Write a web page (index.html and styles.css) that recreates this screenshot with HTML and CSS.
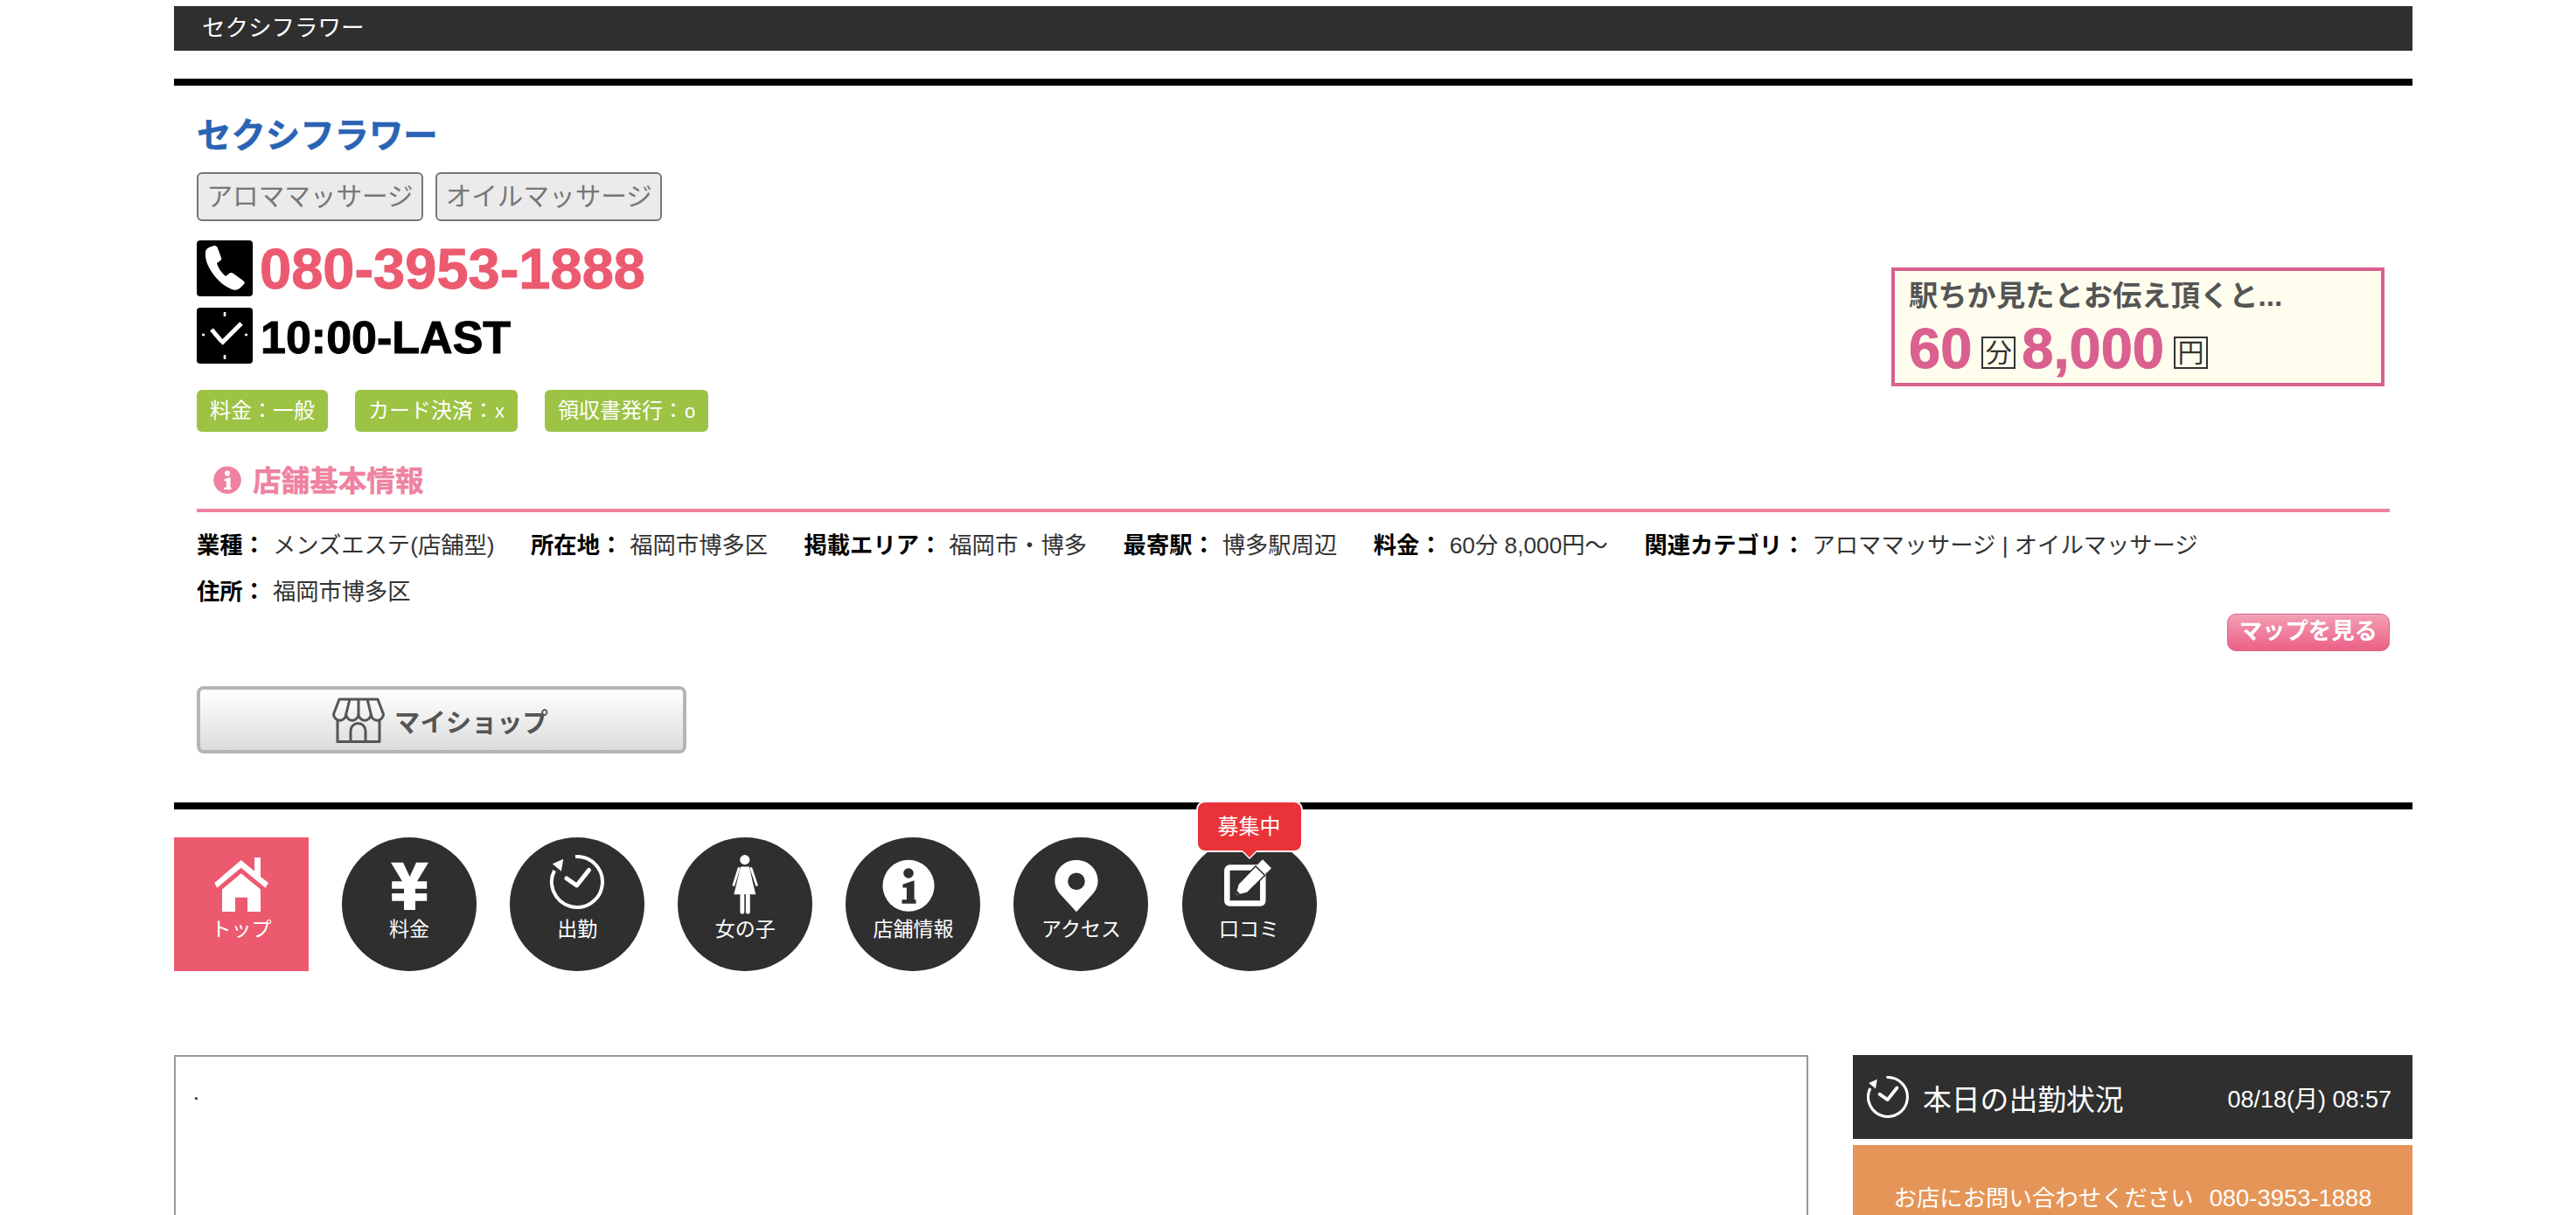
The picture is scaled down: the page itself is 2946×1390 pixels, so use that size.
FILE: index.html
```html
<!DOCTYPE html>
<html lang="ja">
<head>
  <meta charset="UTF-8">
  <title>セクシフラワー</title>
  <link rel="stylesheet" href="styles.css">
</head>
<body>
  <div class="wrap">
    <div class="topbar">セクシフラワー</div>

    <div class="shop">
      <div class="shop-top">
        <div class="shop-main">
          <h1 class="shop-name">セクシフラワー</h1>
          <div class="tags">
            <span class="tag">アロママッサージ</span>
            <span class="tag">オイルマッサージ</span>
          </div>
          <div class="phone-row">
            <svg class="square-icon" viewBox="0 0 64 64">
              <rect width="64" height="64" rx="4" fill="#000"/>
              <path fill="#fff" d="M14 8 L20 6 Q23 6 24 9 L28 20 Q29 22 26 24 L23 26 Q25 34 33 41 L37 38 Q39 36 42 38 L53 46 Q56 48 54 50 L49 55 Q45 58 40 56 Q26 50 17 36 Q9 24 10 14 Q10 10 14 8 Z"/>
            </svg>
            <span class="phone-no">080-3953-1888</span>
          </div>
          <div class="hours-row">
            <svg class="square-icon" viewBox="0 0 64 64">
              <rect width="64" height="64" rx="4" fill="#000"/>
              <path fill="none" stroke="#fff" stroke-width="2.6" d="M32 5 V10 M32 54 V59 M6 31 H9 M55 31 H58"/>
              <path fill="none" stroke="#fff" stroke-width="5" d="M17 25 L28 38 M28 41 L51 18"/>
            </svg>
            <span class="hours">10:00-LAST</span>
          </div>
          <div class="badges">
            <span class="badge">料金：一般</span>
            <span class="badge">カード決済：<small>x</small></span>
            <span class="badge">領収書発行：<small>o</small></span>
          </div>
        </div>
        <div class="promo">
          <div class="promo-title">駅ちか見たとお伝え頂くと...</div>
          <div class="promo-price">
            <span class="promo-num">60</span><span class="promo-unit">分</span>
            <span class="promo-num">8,000</span><span class="promo-unit">円</span>
          </div>
        </div>
      </div>

      <h2 class="info-head">
        <svg class="info-head-icon" viewBox="10 5 60 60">
          <circle cx="40" cy="35.3" r="29.5" fill="#ee82a0"/>
          <circle cx="40" cy="21" r="5.8" fill="#fff"/>
          <path fill="#fff" d="M33.4 33.7 L46.6 29.3 V51.3 H48.5 V55.7 H32.5 V51.3 H37.9 V37.5 H33.4 Z"/>
        </svg>
        店舗基本情報
      </h2>

      <div class="details">
        <div class="detail"><b>業種：</b><span>メンズエステ(店舗型)</span></div>
        <div class="detail"><b>所在地：</b><span>福岡市博多区</span></div>
        <div class="detail"><b>掲載エリア：</b><span>福岡市・博多</span></div>
        <div class="detail"><b>最寄駅：</b><span>博多駅周辺</span></div>
        <div class="detail"><b>料金：</b><span>60分 8,000円～</span></div>
        <div class="detail"><b>関連カテゴリ：</b><span>アロママッサージ | オイルマッサージ</span></div>
        <div class="detail"><b>住所：</b><span>福岡市博多区</span></div>
      </div>

      <div class="map-row"><a class="map-btn">マップを見る</a></div>

      <a class="myshop-btn">
        <svg class="myshop-icon" viewBox="0 0 60 52" fill="none" stroke="#555" stroke-width="3" stroke-linejoin="round">
          <path d="M8 2 H52 L58.5 19 A7.1 7.1 0 0 1 44.25 19 A7.1 7.1 0 0 1 30 19 A7.1 7.1 0 0 1 15.75 19 A7.1 7.1 0 0 1 1.5 19 Z"/>
          <path d="M20 2 L15.75 19 M30 2 V19 M40 2 L44.25 19"/>
          <path d="M6 26 V50.5 H54 V26"/>
          <path d="M21 50 V38 A8.5 8.5 0 0 1 38 38 V50"/>
        </svg>
        マイショップ
      </a>
    </div>

    <nav class="nav">
      <a class="nav-item nav-item-top">
        <svg class="nav-icon" viewBox="0 0 90 70" fill="#fff">
          <path d="M44.7 6 L60 18.8 V3 H67 V25 L76 32 L72.6 37.7 L44.7 14.7 L17.2 37.7 L14.4 32 Z"/>
          <path d="M44.7 21.3 L67 39.5 V65 H52 V48.7 H38 V65 H23 V39.5 Z"/>
        </svg>
        <span>トップ</span>
      </a>
      <a class="nav-item">
        <svg class="nav-icon" viewBox="0 0 90 70" fill="#fff">
          <path d="M24 8.7 H38 L45.6 25 L53 8.7 H67 L54 30.3 H65.2 V38.7 H52 V44 H65.2 V52.7 H52 V63 H39 V52.7 H25.2 V44 H39 V38.7 H25.2 V30.3 H37 Z"/>
        </svg>
        <span>料金</span>
      </a>
      <a class="nav-item">
        <svg class="nav-icon" viewBox="0 0 90 70">
          <path fill="none" stroke="#fff" stroke-width="4" d="M43 2 A29 29 0 1 1 19 18"/>
          <path fill="#fff" d="M29.3 4.7 L16.8 10.3 L26.8 18.7 Z"/>
          <path fill="none" stroke="#fff" stroke-width="5" stroke-linecap="round" stroke-linejoin="round" d="M33 27 L44.6 35 L58.5 17.5"/>
        </svg>
        <span>出勤</span>
      </a>
      <a class="nav-item">
        <svg class="nav-icon" viewBox="0 0 90 70" fill="#fff">
          <circle cx="44.8" cy="5.6" r="5.6"/>
          <path d="M40 13.5 H50 L53.5 30 L57.3 45.3 H32.3 L36 30 Z"/>
          <path fill="none" stroke="#fff" stroke-width="2.8" stroke-linecap="round" d="M38 15.5 L32 34.5 M52 15.5 L58.4 34.5"/>
          <rect x="39.4" y="44" width="4.9" height="23.7" rx="2.4"/>
          <rect x="45.9" y="44" width="4.9" height="23.7" rx="2.4"/>
        </svg>
        <span>女の子</span>
      </a>
      <a class="nav-item">
        <svg class="nav-icon" viewBox="0 0 90 70">
          <circle cx="40" cy="35.3" r="29.5" fill="#fff"/>
          <circle cx="40" cy="21" r="5.8" fill="#2f2f2f"/>
          <path fill="#2f2f2f" d="M33.4 33.7 L46.6 29.3 V51.3 H48.5 V55.7 H32.5 V51.3 H37.9 V37.5 H33.4 Z"/>
        </svg>
        <span>店舗情報</span>
      </a>
      <a class="nav-item">
        <svg class="nav-icon" viewBox="0 0 90 70">
          <path fill="#fff" fill-rule="evenodd" d="M40 6 C26 6 15.4 16.5 15.4 30 C15.4 36 18 41 22 45.5 L40 65.3 L58 45.5 C62 41 64.6 36 64.6 30 C64.6 16.5 54 6 40 6 Z M40 20.5 A9.8 9.8 0 1 1 40 40.1 A9.8 9.8 0 1 1 40 20.5 Z"/>
        </svg>
        <span>アクセス</span>
      </a>
      <a class="nav-item">
        <svg class="nav-icon" viewBox="0 0 90 70">
          <rect x="19.3" y="14.6" width="41" height="41" rx="3" fill="none" stroke="#fff" stroke-width="6.5"/>
          <path fill="#fff" stroke="#2f2f2f" stroke-width="3" paint-order="stroke" d="M29.3 46 L32.7 33.7 L52 14 L61.5 23.5 L42 42.7 Z"/>
          <path fill="#2f2f2f" d="M29.3 46 L30.6 41 L34.2 44.6 Z"/>
          <path fill="#fff" d="M60 5.3 L70 15.3 L64.3 21 L54.3 11 Z"/>
        </svg>
        <span>口コミ</span>
        <em class="recruit">募集中</em>
      </a>
    </nav>

    <div class="content">
      <div class="content-main">.</div>
      <aside class="side">
        <div class="side-head">
          <svg class="side-head-icon" viewBox="14 0 62 62">
            <path fill="none" stroke="#fff" stroke-width="4" d="M43 2 A29 29 0 1 1 19 18"/>
            <path fill="#fff" d="M29.3 4.7 L16.8 10.3 L26.8 18.7 Z"/>
            <path fill="none" stroke="#fff" stroke-width="5" stroke-linecap="round" stroke-linejoin="round" d="M33 27 L44.6 35 L58.5 17.5"/>
          </svg>
          <span class="side-title">本日の出勤状況</span>
          <span class="side-date">08/18(月) 08:57</span>
        </div>
        <div class="side-contact">お店にお問い合わせください<span class="side-tel">080-3953-1888</span></div>
      </aside>
    </div>
  </div>
</body>
</html>
```

FILE: styles.css
```css
html, body {
  height: 100%;
  overflow: hidden;
}
body {
  margin: 0;
  background: #fff;
  color: #333;
  font-family: "Liberation Sans", "Noto Sans CJK JP", sans-serif;
}
a {
  color: inherit;
  text-decoration: none;
}
.wrap {
  width: 2560px;
  margin-left: 199px;
  padding-top: 7px;
}

/* top bar */
.topbar {
  height: 51px;
  line-height: 51px;
  padding-left: 32px;
  background: #2f2f2f;
  color: #fff;
  font-size: 26.5px;
}

/* shop block */
.shop {
  margin-top: 32px;
  padding: 0 26px 56px;
  border-top: 8px solid #000;
  border-bottom: 8px solid #000;
}
.shop-top {
  display: flex;
  justify-content: space-between;
}
.shop-name {
  margin: 33px 0 0;
  height: 48px;
  line-height: 48px;
  font-size: 39.4px;
  color: #2a63b5;
  -webkit-text-stroke: 0.5px #2a63b5;
}
.tags {
  display: flex;
  gap: 14px;
  margin-top: 18px;
}
.tag {
  height: 52px;
  line-height: 52px;
  padding: 0 9.5px;
  border: 2px solid #777;
  border-radius: 6px;
  background: #ebebeb;
  color: #777;
  font-size: 29.6px;
}
.phone-row, .hours-row {
  display: flex;
  align-items: center;
  gap: 8px;
  height: 64px;
}
.phone-row {
  margin-top: 22px;
}
.hours-row {
  margin-top: 13px;
}
.square-icon {
  width: 64px;
  height: 64px;
}
.phone-no {
  font-size: 65px;
  font-weight: bold;
  color: #ec5a70;
  -webkit-text-stroke: 1px #ec5a70;
}
.hours {
  padding: 4px 0 0 1px;
  font-size: 52px;
  font-weight: bold;
  color: #000;
  -webkit-text-stroke: 1px #000;
}
.badges {
  display: flex;
  gap: 31px;
  margin-top: 30px;
}
.badge {
  height: 48px;
  line-height: 48px;
  padding: 0 15px;
  border-radius: 6px;
  background: #9dc345;
  color: #fff;
  font-size: 24px;
}
.badge small {
  font-size: 22px;
  padding-left: 1px;
}

/* price box */
.promo {
  align-self: flex-start;
  box-sizing: border-box;
  width: 564px;
  height: 136px;
  margin: 208px 6px 0 0;
  padding: 9px 16px 0;
  border: 4px solid #d9608f;
  background: #fffeee;
}
.promo-title {
  line-height: 40px;
  font-size: 33.3px;
  font-weight: bold;
  color: #555;
}
.promo-price {
  display: flex;
  align-items: center;
  height: 64px;
  margin-top: 7px;
}
.promo-num {
  font-size: 65px;
  font-weight: bold;
  color: #d9608f;
  -webkit-text-stroke: 1px #d9608f;
}
.promo-unit {
  width: 35px;
  height: 33px;
  line-height: 33px;
  margin: 11px 7px 0 11px;
  border: 2px solid #333;
  text-align: center;
  font-size: 30px;
}

/* info */
.info-head {
  display: flex;
  align-items: center;
  gap: 13px;
  margin: 37px 0 0;
  padding: 2px 0 14px 19px;
  border-bottom: 4px solid #ee82a0;
  line-height: 35px;
  font-size: 32.6px;
  color: #ee82a0;
  -webkit-text-stroke: 0.4px #ee82a0;
}
.info-head-icon {
  width: 32px;
  height: 32px;
  margin-top: -4px;
}
.details {
  display: flex;
  flex-wrap: wrap;
  column-gap: 41.5px;
  padding-top: 12px;
  line-height: 53px;
  font-size: 26.3px;
}
.detail b {
  color: #000;
  margin-right: 8px;
}
.map-row {
  display: flex;
  justify-content: flex-end;
  margin-top: -2px;
}
.map-btn {
  box-sizing: border-box;
  height: 43px;
  line-height: 39px;
  padding: 0 13px;
  border: 1px solid #d9688a;
  border-radius: 10px;
  background: linear-gradient(#f2a0b4, #ec5f87);
  color: #fff;
  font-size: 26.4px;
  font-weight: bold;
}
.myshop-btn {
  display: flex;
  align-items: center;
  justify-content: center;
  gap: 11px;
  box-sizing: border-box;
  width: 560px;
  height: 77px;
  margin-top: 40px;
  padding-right: 3px;
  border: 4px solid #b5b5b5;
  border-radius: 8px;
  background: linear-gradient(#fff, #dcdcdc);
  color: #555;
  font-size: 29.3px;
  font-weight: bold;
}
.myshop-icon {
  width: 60px;
  height: 52px;
}

/* round nav */
.nav {
  display: flex;
  gap: 38.1px;
  margin-top: 32px;
}
.nav-item {
  position: relative;
  display: flex;
  flex-direction: column;
  align-items: center;
  box-sizing: border-box;
  width: 154px;
  height: 153px;
  padding-top: 20px;
  border-radius: 50%;
  background: #2f2f2f;
  color: #fff;
  font-size: 23px;
  line-height: 30px;
}
.nav-item-top {
  border-radius: 0;
  background: #ec5a70;
}
.nav-icon {
  width: 90px;
  height: 70px;
}
.recruit {
  position: absolute;
  top: -42px;
  left: 50%;
  transform: translateX(-50%);
  width: 118px;
  height: 55px;
  line-height: 55px;
  border: 2px solid #fff;
  border-radius: 10px;
  background: #e93339;
  text-align: center;
  font-size: 24px;
  font-style: normal;
}
.recruit::before, .recruit::after {
  content: "";
  position: absolute;
  left: 50%;
  margin-left: -10px;
  border: 10px solid transparent;
  border-bottom: 0;
}
.recruit::before {
  top: 55px;
  border-top-color: #fff;
}
.recruit::after {
  top: 53px;
  border-top-color: #e93339;
}

/* lower content */
.content {
  display: flex;
  justify-content: space-between;
  margin-top: 96px;
}
.content-main {
  box-sizing: border-box;
  width: 1869px;
  height: 600px;
  padding: 26px 20px;
  border: 2px solid #999;
  color: #000;
  font-size: 24px;
  line-height: 29px;
}
.side {
  width: 640px;
}
.side-head {
  display: flex;
  align-items: center;
  height: 96px;
  padding: 0 24px 0 16px;
  background: #2f2f2f;
  color: #fff;
}
.side-head-icon {
  width: 48px;
  height: 48px;
  margin-right: 16px;
}
.side-title {
  font-size: 32.8px;
}
.side-date {
  margin-left: auto;
  font-size: 27px;
}
.side-contact {
  margin-top: 7px;
  padding: 44px 0 40px;
  background: #e59557;
  color: #fff;
  text-align: center;
  font-size: 26.4px;
  line-height: 34px;
}
.side-tel {
  margin-left: 18px;
  font-size: 27.4px;
}
```
